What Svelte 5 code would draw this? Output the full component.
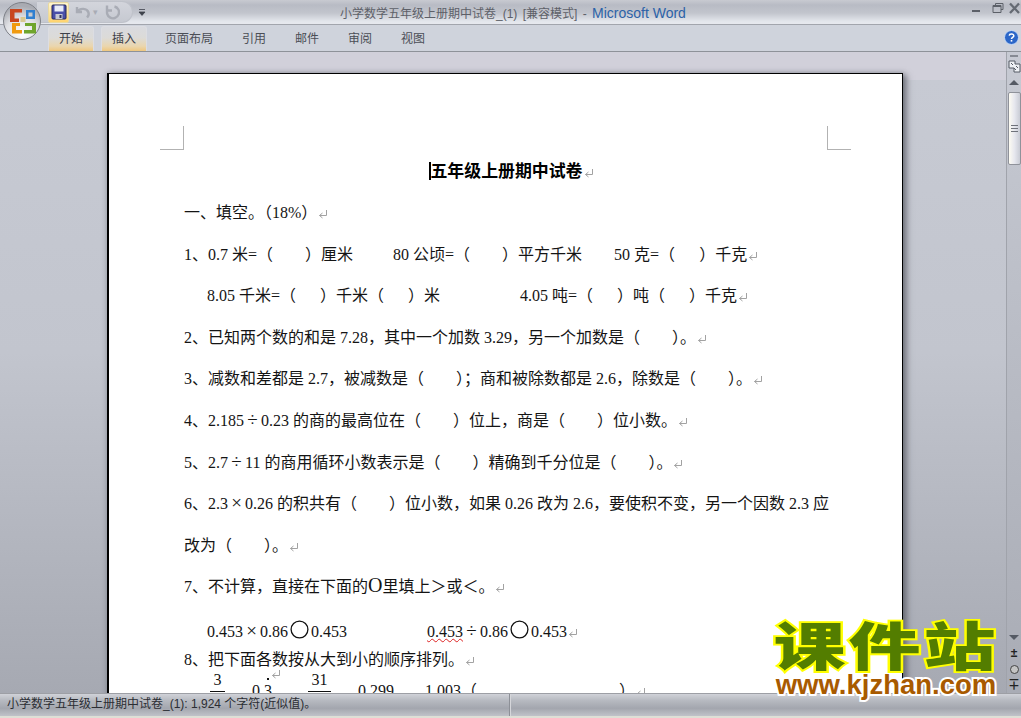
<script>
  const tabs = [
    { label: '开始', on: true },
    { label: '插入', on: true },
    { label: '页面布局' },
    { label: '引用' },
    { label: '邮件' },
    { label: '审阅' },
    { label: '视图' }
  ];

  // numbers are blank widths in px
  const lines = [
    { parts: ['一、填空。（18%）'] },
    { parts: ['1、0.7 米=（', 32, '）厘米', 40, '80 公顷=（', 32, '）平方千米', 32, '50 克=（', 24, '）千克'] },
    { indent: true, parts: ['8.05 千米=（', 24, '）千米（', 24, '）米', 80, '4.05 吨=（', 24, '）吨（', 24, '）千克'] },
    { parts: ['2、已知两个数的和是 7.28，其中一个加数 3.29，另一个加数是（', 32, '）。'] },
    { parts: ['3、减数和差都是 2.7，被减数是（', 32, '）；商和被除数都是 2.6，除数是（', 32, '）。'] },
    { parts: ['4、2.185÷0.23 的商的最高位在（', 32, '）位上，商是（', 32, '）位小数。'] },
    { parts: ['5、2.7÷11 的商用循环小数表示是（', 32, '）精确到千分位是（', 32, '）。'] },
    { parts: ['6、2.3×0.26 的积共有（', 32, '）位小数，如果 0.26 改为 2.6，要使积不变，另一个因数 2.3 应'], noMark: true },
    { parts: ['改为（', 32, '）。'] },
    { parts: ['7、不计算，直接在下面的O里填上＞或＜。'] }
  ];

  const pieces = (s) => s.split(/([×÷O])/);
</script>

{#snippet mark()}
  <svg class="mark" width="10" height="10" viewBox="0 0 10 10" aria-hidden="true">
    <path d="M8.5 1v5.5H1.5M1.5 6.5l3-2.5M1.5 6.5l3 2.5" fill="none" stroke="#a2a2a2" />
  </svg>
{/snippet}

{#snippet ring()}
  <svg class="ring" width="19" height="19" viewBox="0 0 19 19" aria-hidden="true">
    <circle cx="9.5" cy="9.5" r="8.4" fill="none" stroke="#111" stroke-width="1.3" />
  </svg>
{/snippet}

{#snippet text(s)}
  {#each pieces(s) as bit}{#if bit === '×' || bit === '÷'}<span class="op">{bit}</span>{:else if bit === 'O'}<span class="bigo">{bit}</span>{:else}{bit}{/if}{/each}
{/snippet}

<div class="word">
  <header class="titlebar">
    <div class="qat">
      <button class="save" aria-label="保存">
        <svg width="16" height="16" viewBox="0 0 16 16">
          <rect x="1" y="1" width="14" height="14" rx="1" fill="#4a4fa8" stroke="#23265e" />
          <rect x="3.5" y="1.5" width="9" height="6" fill="#e8ecf8" />
          <rect x="4.5" y="10" width="7" height="5" fill="#c6c8d4" />
          <rect x="8.5" y="11" width="2" height="3" fill="#30345c" />
        </svg>
      </button>
      <svg class="undo" width="16" height="16" viewBox="0 0 16 16">
        <path d="M2 3v5h5M2.6 7.5C5 3.8 12 4 13.5 8.5c.6 2-.3 3.8-1.5 5" fill="none" stroke="#a9acb5" stroke-width="2.4" />
      </svg>
      <span class="drop">▾</span>
      <svg class="redo" width="16" height="16" viewBox="0 0 16 16">
        <path d="M10.5 2.5A6 6 0 1 1 4 5M3 1.5v5h5" fill="none" stroke="#a9acb5" stroke-width="2.4" />
      </svg>
    </div>
    <svg class="customize" width="8" height="8" viewBox="0 0 8 8">
      <path d="M1 1.5h6M1 4h6l-3 3.4z" fill="#3f434c" stroke="#3f434c" stroke-width=".8" />
    </svg>
    <div class="title">小学数学五年级上册期中试卷_(1) [兼容模式] - <span>Microsoft Word</span></div>
    <div class="winctl">
      <svg width="54" height="14" viewBox="0 0 54 14">
        <rect x="5" y="9" width="8" height="2" fill="#5c6068" />
        <path d="M26 4.5h8v7h-8zM28.5 4.5V2.5H36v6h-2" fill="none" stroke="#5c6068" />
        <rect x="26" y="4" width="8" height="2" fill="#5c6068" />
        <path d="M43 2.5l9 9.5M52 2.5l-9 9.5" fill="none" stroke="#656a73" stroke-width="2.3" />
      </svg>
    </div>
  </header>

  <button class="office" aria-label="Office">
    <svg width="40" height="40" viewBox="0 0 40 40">
      <defs>
        <radialGradient id="orb" cx="50%" cy="85%" r="75%">
          <stop offset="0" stop-color="#ffffff" />
          <stop offset=".6" stop-color="#dfe0e4" />
          <stop offset="1" stop-color="#a9abb2" />
        </radialGradient>
      </defs>
      <circle cx="20" cy="20" r="18.5" fill="url(#orb)" stroke="#7d8087" />
      <path d="M8 8h12v3.5h-7.5v6H17V21H8z" fill="#c8461e" />
      <path d="M10 22h8v3h-4v4h6v3.5H10z" fill="#f09a10" />
      <path d="M24 9h9v9h-9zM26.5 11.5v4h4v-4z" fill="#2f7fd0" fill-rule="evenodd" />
      <path d="M23 22h11v10.5H22V29h8v-4h-7z" fill="#6fa52c" />
      <rect x="18.5" y="16" width="5" height="5" fill="#d8c890" />
    </svg>
  </button>

  <nav class="ribbon">
    {#each tabs as t}
      <span class="tab" class:on={t.on}>{t.label}</span>
    {/each}
    <svg class="help" width="15" height="15" viewBox="0 0 15 15">
      <circle cx="7.5" cy="7.5" r="7" fill="#2b66c8" stroke="#c9dcf6" />
      <path d="M5.2 5.6C5.4 3.3 10 3.4 9.8 5.9 9.7 7.3 7.5 7.3 7.5 9" fill="none" stroke="#fff" stroke-width="1.5" />
      <rect x="6.7" y="10" width="1.6" height="1.6" fill="#fff" />
    </svg>
  </nav>

  <div class="middle">
    <main class="workspace">
      <article class="page">
        <i class="crop left"></i>
        <i class="crop right"></i>

        <h1><b class="caret"></b>五年级上册期中试卷{@render mark()}</h1>

        {#each lines as l}
          <p class:indent={l.indent}>{#each l.parts as part}{#if typeof part === 'number'}<span class="gap" style="width:{part}px"></span>{:else}{@render text(part)}{/if}{/each}{#if !l.noMark}{@render mark()}{/if}</p>
        {/each}

        <p class="indent compare">{@render text('0.453×0.86')}{@render ring()}0.453<span class="second"><u>0.453</u>{@render text('÷0.86')}</span>{@render ring()}0.453{@render mark()}</p>
        <p class="tight">8、把下面各数按从大到小的顺序排列。{@render mark()}</p>
        <p class="fractions"><span class="frac one">3</span><span class="dotted">0.3<i></i><span class="lift">{@render mark()}</span></span><span class="frac two">31</span><span class="v1">0.299</span><span class="v2">1.003（</span><span class="gap" style="width:142px"></span>）{@render mark()}</p>
      </article>
    </main>

    <aside class="scrollbar">
      <i class="rule"></i>
      <svg class="ruler-btn" width="13" height="13" viewBox="0 0 13 13">
        <path d="M1 1h6v3h5v8H6V8H1z" fill="#eef0f4" stroke="#555a64" />
        <path d="M3 3l2 2M8 6l2 2M6 8l2 2" stroke="#555a64" />
      </svg>
      <span class="arrow up"></span>
      <div class="thumb"><i></i><i></i><i></i></div>
      <div class="track"></div>
      <span class="arrow down"></span>
      <span class="nav">±</span>
      <span class="dot"></span>
      <span class="nav">∓</span>
    </aside>
  </div>

  <footer class="status">
    <span class="count">小学数学五年级上册期中试卷_(1): 1,924 个字符(近似值)。</span>
    <span class="rest"></span>
  </footer>

  <div class="stamp">
    <div class="cn">课件站</div>
    <div class="url">www.kjzhan.com</div>
  </div>
</div>

<style>
  :global(body) {
    margin: 0;
    overflow: hidden;
  }

  .word {
    position: relative;
    width: 1021px;
    height: 718px;
    display: flex;
    flex-direction: column;
    overflow: hidden;
    font-family: "Liberation Sans", "Noto Sans CJK SC", sans-serif;
    background: #c6c9d2;
  }

  .titlebar {
    height: 24px;
    flex: none;
    display: flex;
    align-items: center;
    position: relative;
    background: linear-gradient(#c8cad1 0, #b8bbc4 5px, #c2c5cd 13px, #e2e5eb 21px, #e6e8ee 23px);
    border-bottom: 1px solid #a2a5ad;
  }

  .qat {
    margin-left: 37px;
    width: 96px;
    height: 22px;
    display: flex;
    align-items: center;
    border-radius: 0 12px 12px 0;
    border: 1px solid #bfc2ca;
    border-left: 0;
    background: linear-gradient(#d3d5dc, #c6c9d1);
    box-sizing: border-box;
  }

  .save {
    margin-left: 11px;
    width: 21px;
    height: 21px;
    padding: 0;
    display: flex;
    align-items: center;
    justify-content: center;
    border: 1px solid #e9d9a0;
    border-radius: 2px;
    background: linear-gradient(#fff6cf, #ffd36e);
  }

  .undo { margin-left: 6px; }
  .drop { margin: 0 3px 0 2px; font-size: 9px; color: #a9acb5; }
  .redo { margin-left: 3px; }
  .customize { margin-left: 5px; }

  .title {
    position: absolute;
    left: 340px;
    top: 5px;
    font-size: 12px;
    line-height: 16px;
    word-spacing: 2px;
    color: #5d6068;
    white-space: pre;
  }

  .title span {
    color: #2c62a8;
    font-size: 14px;
    word-spacing: 0;
  }

  .winctl {
    position: absolute;
    right: 0;
    top: 1px;
  }

  .office {
    position: absolute;
    left: 2px;
    top: 1px;
    width: 40px;
    height: 40px;
    padding: 0;
    border: 0;
    background: none;
    z-index: 3;
  }

  .ribbon {
    height: 26px;
    flex: none;
    display: flex;
    align-items: flex-end;
    padding-left: 48px;
    position: relative;
    background: #cfd3dc;
    border-bottom: 1px solid #8e9299;
  }

  .tab {
    height: 25px;
    line-height: 26px;
    padding: 0 11px;
    margin-right: 7px;
    font-size: 12px;
    color: #4b4e56;
    box-sizing: border-box;
    white-space: nowrap;
  }

  .tab.on {
    width: 46px;
    padding: 0 10px;
    border: 1px solid #dcdde2;
    border-bottom: 0;
    border-radius: 3px 3px 0 0;
    line-height: 24px;
    color: #3d4048;
    background: linear-gradient(#d9dadf 0, #dcdbd8 45%, #ead6ae 80%, #efc77f 100%);
  }

  .help {
    position: absolute;
    right: 2px;
    top: 5px;
  }

  .middle {
    flex: 1;
    min-height: 0;
    display: flex;
  }

  .workspace {
    flex: 1;
    min-width: 0;
    padding: 21px 0 0 107px;
    overflow: hidden;
    background: linear-gradient(#d1d0da 0, #d1d0da 28px, #c7cad3 28px, #c2c5ce 300px, #a6a9b2 100%);
  }

  .page {
    position: relative;
    width: 796px;
    height: 800px;
    padding: 77px 0 0 75px;
    box-sizing: border-box;
    background: #fff;
    border: 1px solid #000;
    border-left-width: 2px;
    box-shadow: 0 0 5px rgba(90, 94, 104, 0.45), 4px 2px 6px rgba(50, 52, 60, 0.5);
    font-family: "Liberation Serif", "Noto Sans CJK SC", serif;
    font-size: 16px;
    color: #141414;
  }

  .crop {
    position: absolute;
    top: 52px;
    width: 23px;
    height: 23px;
    border-bottom: 1px solid #b2b2b2;
  }

  .crop.left {
    left: 51px;
    border-right: 1px solid #b2b2b2;
  }

  .crop.right {
    left: 718px;
    border-left: 1px solid #b2b2b2;
  }

  h1 {
    margin: 0 0 0 -75px;
    width: 793px;
    padding-left: 12px;
    box-sizing: border-box;
    text-align: center;
    font-size: 16.9px;
    font-weight: 700;
    line-height: 42px;
    height: 41px;
    color: #000;
  }

  .caret {
    display: inline-block;
    width: 2px;
    height: 18px;
    margin-right: -1px;
    vertical-align: -3px;
    background: #000;
  }

  p {
    margin: 0;
    height: 41.6px;
    line-height: 41.6px;
    white-space: pre;
  }

  p.indent {
    padding-left: 23px;
  }

  .gap {
    display: inline-block;
  }

  .op {
    display: inline-block;
    width: 17px;
    text-align: center;
    font-size: 19px;
    line-height: 1;
  }

  .bigo {
    font-size: 20px;
    line-height: 1;
  }

  .mark {
    margin-left: 1px;
    vertical-align: -1px;
  }

  .compare {
    height: 40px;
    padding-top: 7px;
    box-sizing: border-box;
    line-height: 33px;
  }

  .ring {
    vertical-align: -2px;
    margin: 0 2px;
  }

  .second {
    margin-left: 80px;
  }

  u {
    text-decoration: underline wavy #d22;
    text-decoration-thickness: 1px;
  }

  .tight {
    height: 24px;
    line-height: 24px;
  }

  .fractions {
    height: 38px;
    line-height: 38px;
    position: relative;
  }

  .frac {
    position: absolute;
    top: -4px;
    line-height: 23px;
    height: 23px;
    text-align: center;
    border-bottom: 1px solid #111;
  }

  .frac.one { left: 26px; width: 15px; }
  .frac.two { left: 124px; width: 23px; }

  .dotted { margin-left: 68px; position: relative; }
  .v1 { margin-left: 86px; }
  .v2 { margin-left: 31px; }

  .dotted i {
    position: absolute;
    right: 3px;
    top: -4px;
    width: 2px;
    height: 2px;
    background: #111;
  }

  .lift {
    position: absolute;
    left: 18px;
    top: -14px;
    line-height: 10px;
  }

  .scrollbar {
    width: 14px;
    flex: none;
    display: flex;
    flex-direction: column;
    align-items: center;
    background: linear-gradient(#c7cad3, #a9acb5);
    border-left: 1px solid #a0a3ab;
  }

  .rule {
    width: 8px;
    height: 2px;
    margin: 3px 0 3px;
    background: #868a93;
  }

  .arrow {
    width: 0;
    height: 0;
    border-left: 5px solid transparent;
    border-right: 5px solid transparent;
    margin: 7px 0;
  }

  .arrow.up { border-bottom: 5px solid #555a64; }
  .arrow.down { border-top: 5px solid #555a64; margin-top: 4px; margin-bottom: 6px; }

  .thumb {
    width: 13px;
    height: 73px;
    box-sizing: border-box;
    border: 1px solid #8f929a;
    border-radius: 2px;
    background: linear-gradient(90deg, #fdfbf2, #e6e7ee 50%, #c9ccd5);
    display: flex;
    flex-direction: column;
    justify-content: center;
    align-items: center;
    gap: 2px;
  }

  .thumb i {
    width: 7px;
    height: 1px;
    background: #6f727a;
  }

  .track {
    flex: 1;
  }

  .nav {
    font-size: 12px;
    line-height: 15px;
    font-weight: 700;
    color: #222;
  }

  .dot {
    width: 7px;
    height: 7px;
    margin: 4px 0;
    border: 1px solid #444;
    border-radius: 50%;
    background: #c4c4c4;
  }

  .status {
    height: 25px;
    flex: none;
    display: flex;
    box-sizing: border-box;
    border-top: 1px solid #9d9fa5;
    border-bottom: 2px solid #dedfd6;
    background: linear-gradient(#d0d2d8 0, #b6b9c0 30%, #a3a6ae 65%, #c0c2c9 100%);
    font-size: 12px;
    line-height: 21px;
    color: #2b2d33;
  }

  .count {
    width: 510px;
    padding-left: 7px;
    box-sizing: border-box;
    border-right: 1px solid #8d9097;
    white-space: nowrap;
  }

  .rest {
    flex: 1;
    border-left: 1px solid #d5d6da;
  }

  .stamp {
    position: absolute;
    left: 771px;
    top: 615px;
    width: 230px;
    text-align: center;
    z-index: 4;
  }

  .cn {
    height: 57px;
    line-height: 57px;
    font-family: "Noto Sans CJK SC", sans-serif;
    font-size: 72px;
    font-weight: 900;
    color: #537d00;
    -webkit-text-stroke: 5px #ffff00;
    paint-order: stroke fill;
    transform: scaleY(0.72);
    white-space: nowrap;
    letter-spacing: 3px;
  }

  .url {
    font-family: "Liberation Sans", sans-serif;
    font-size: 27.5px;
    line-height: 26px;
    font-weight: 700;
    color: #a85a00;
    -webkit-text-stroke: 4px #fff;
    paint-order: stroke fill;
    white-space: nowrap;
  }
</style>
